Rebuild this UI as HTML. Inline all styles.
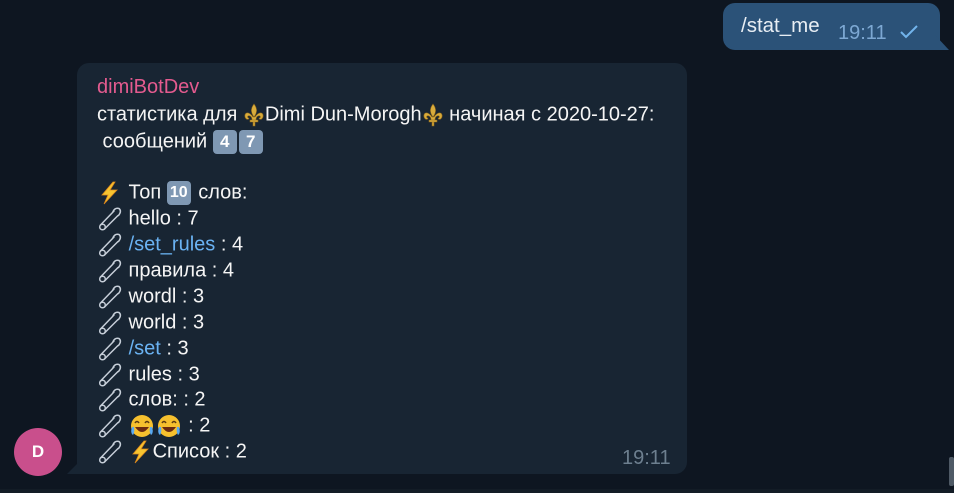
<!DOCTYPE html>
<html><head><meta charset="utf-8"><style>
html,body{margin:0;padding:0}
body{width:954px;height:493px;background:#0e1621;position:relative;overflow:hidden;font-family:"Liberation Sans",sans-serif;}
.out{position:absolute;left:723px;top:3px;width:217px;height:47px;background:#2b5278;border-radius:12px 12px 0 12px;}
.outtail{position:absolute;left:935px;top:35px;width:14px;height:15px;background:#2b5278;clip-path:polygon(0 0,100% 100%,0 100%);}
.bub{position:absolute;left:77px;top:63px;width:610px;height:411px;background:#182533;border-radius:12px 12px 12px 0;}
.tail{position:absolute;left:67px;top:462px;width:12px;height:12px;background:#182533;clip-path:polygon(100% 0,100% 100%,0 100%);}
.t{position:absolute;color:#f5f5f5;font-size:20px;white-space:nowrap;line-height:20px}
.l{color:#6ab2f2}
svg{display:inline-block;vertical-align:middle}
.av{position:absolute;left:14px;top:428px;width:48px;height:48px;border-radius:50%;background:#c94f8c;color:#fff;font-size:17px;text-align:center;line-height:48px;font-weight:bold}
.kc{display:inline-block;width:24px;height:24px;border-radius:4px;background:#7f98b3;color:#fff;font-weight:bold;font-size:17px;text-align:center;line-height:24px;vertical-align:middle;margin-right:2px}
</style></head><body>
<div class="out"></div><div class="outtail"></div>
<div class="t" style="left:741px;top:16px;color:#e8eef4;font-size:20.5px">/stat_me</div>
<div class="t" style="left:838px;top:23px;color:#7da8d3;font-size:20px">19:11</div>
<svg style="position:absolute;left:899px;top:24px" width="20" height="16" viewBox="0 0 20 16"><path d="M2 8 L7 13 L18 2" fill="none" stroke="#72b4ec" stroke-width="2"/></svg>

<div class="bub"></div><div class="tail"></div>
<div class="av">D</div>
<div class="t" style="left:97px;top:77px;color:#e45b8f">dimiBotDev</div>
<div class="t" style="left:97px;top:103px">статистика для <svg width="22" height="24" viewBox="0 0 22 24"><path d="M11 1 C7 6 8 10 11 14 C14 10 15 6 11 1Z M10 14 C6 8 1 9 2 14 C3 17 6 17 6 15 C4 15 4 12 7 13 C9 14 9 16 9 17 L13 17 C13 16 13 14 15 13 C18 12 18 15 16 15 C16 17 19 17 20 14 C21 9 16 8 12 14Z M7 17 H15 V19 H7Z M10 19 H12 V23 H10Z" fill="#d9ac3c" stroke="#8a6418" stroke-width=".6"/></svg>Dimi Dun-Morogh<svg width="22" height="24" viewBox="0 0 22 24"><path d="M11 1 C7 6 8 10 11 14 C14 10 15 6 11 1Z M10 14 C6 8 1 9 2 14 C3 17 6 17 6 15 C4 15 4 12 7 13 C9 14 9 16 9 17 L13 17 C13 16 13 14 15 13 C18 12 18 15 16 15 C16 17 19 17 20 14 C21 9 16 8 12 14Z M7 17 H15 V19 H7Z M10 19 H12 V23 H10Z" fill="#d9ac3c" stroke="#8a6418" stroke-width=".6"/></svg> начиная с 2020-10-27:</div>
<div class="t" style="left:97px;top:130px">&nbsp;сообщений <span class="kc">4</span><span class="kc">7</span></div>

<div class="t" style="left:97px;top:181px"><svg width="26" height="24" viewBox="0 0 26 24"><path d="M16 1 L5 14 H11 L7 23 L20 9 H13 L18 1Z" fill="#f7c531" stroke="#e08a1a" stroke-width=".8"/></svg> Топ <span class="kc" style="font-size:16px">10</span> слов:</div>

<svg width="0" height="0" style="position:absolute"><defs><g id="pin" fill="none" stroke="#c6ced8" stroke-width="1.5" stroke-linecap="round"><circle cx="5.5" cy="21" r="2.8"/><path d="M3.5 19 L17 5 M7.5 23 L21 9.5 M16 5.5 Q18 1.5 22 2.5 Q25 5 21.5 9.5"/></g></defs></svg>

<div class="t" style="left:97px;top:206px"><svg width="26" height="26" viewBox="0 0 26 26"><use href="#pin"/></svg> hello : 7</div>
<div class="t" style="left:97px;top:232px"><svg width="26" height="26" viewBox="0 0 26 26"><use href="#pin"/></svg> <span class="l">/set_rules</span> : 4</div>
<div class="t" style="left:97px;top:258px"><svg width="26" height="26" viewBox="0 0 26 26"><use href="#pin"/></svg> правила : 4</div>
<div class="t" style="left:97px;top:284px"><svg width="26" height="26" viewBox="0 0 26 26"><use href="#pin"/></svg> wordl : 3</div>
<div class="t" style="left:97px;top:310px"><svg width="26" height="26" viewBox="0 0 26 26"><use href="#pin"/></svg> world : 3</div>
<div class="t" style="left:97px;top:336px"><svg width="26" height="26" viewBox="0 0 26 26"><use href="#pin"/></svg> <span class="l">/set</span> : 3</div>
<div class="t" style="left:97px;top:362px"><svg width="26" height="26" viewBox="0 0 26 26"><use href="#pin"/></svg> rules : 3</div>
<div class="t" style="left:97px;top:387px"><svg width="26" height="26" viewBox="0 0 26 26"><use href="#pin"/></svg> слов: : 2</div>
<div class="t" style="left:97px;top:413px"><svg width="26" height="26" viewBox="0 0 26 26"><use href="#pin"/></svg> <svg width="54" height="26" viewBox="0 0 54 26"><g id="lf"><circle cx="13" cy="13" r="11" fill="#f6c02e"/><path d="M6 10 Q8 7 10 10 M16 10 Q18 7 20 10" stroke="#5b3a12" stroke-width="1.5" fill="none"/><path d="M6 14 Q13 24 20 14Z" fill="#6b2a10"/><path d="M3 14 Q1 20 4 22 Q6 19 5 14Z M23 14 Q25 20 22 22 Q20 19 21 14Z" fill="#5aa9f0"/></g><use href="#lf" x="27"/></svg> : 2</div>
<div class="t" style="left:97px;top:439px"><svg width="26" height="26" viewBox="0 0 26 26"><use href="#pin"/></svg> <svg width="24" height="24" viewBox="0 0 24 24"><path d="M15 1 L4 14 H10 L6 23 L19 9 H12 L17 1Z" fill="#f7c531" stroke="#e08a1a" stroke-width=".8"/></svg>Список : 2</div>
<div class="t" style="left:622px;top:448px;color:#6d7f8f;font-size:20px">19:11</div>

<div style="position:absolute;left:949px;top:457px;width:5px;height:29px;background:#4f5a66;border-radius:2px"></div>
<div style="position:absolute;left:0;top:489px;width:954px;height:4px;background:#131c26"></div>
</body></html>
